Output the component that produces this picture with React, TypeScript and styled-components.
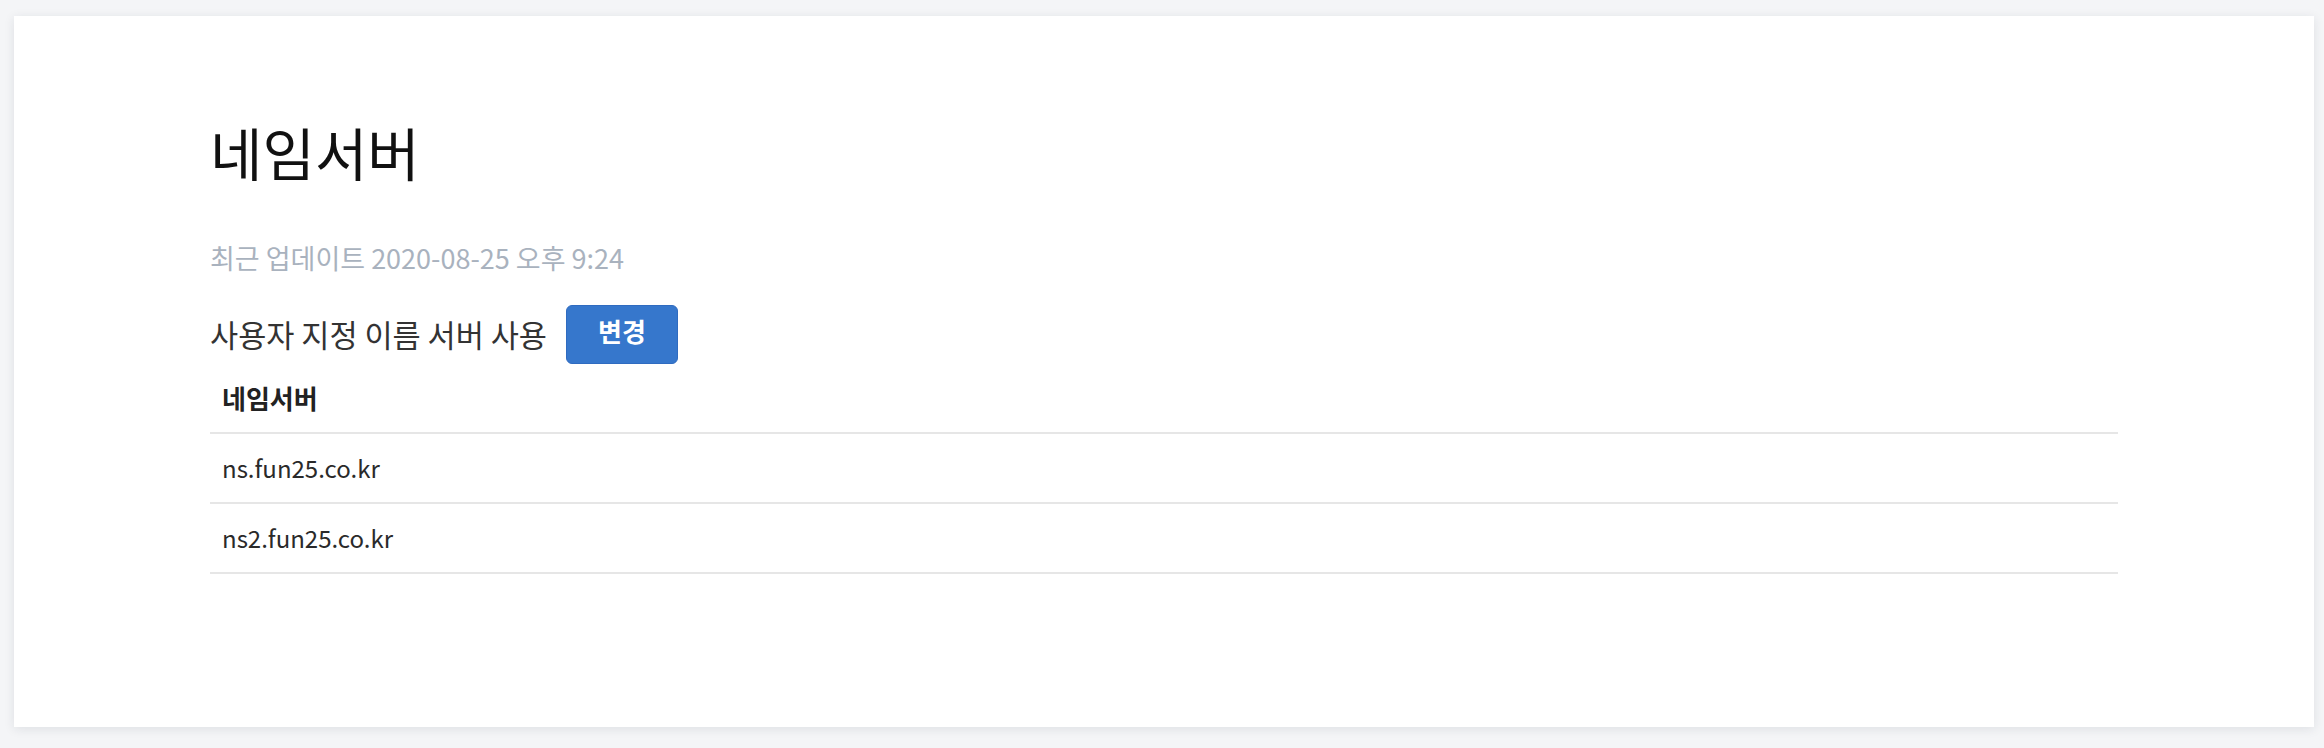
import React from 'react';
import styled, { createGlobalStyle } from 'styled-components';

const GlobalStyle = createGlobalStyle`
   html, body {
      margin: 0;
      padding: 0;
      background: #f4f5f7;
   }

   body {
      font-family: 'Noto Sans CJK KR', 'Noto Sans', sans-serif;
      color: #222;
   }
`;

const Page = styled.div`
   padding: 16px 10px 21px 14px;
`;

const Card = styled.section`
   background: #ffffff;
   height: 711px;
   box-sizing: border-box;
   padding: 96px 196px 0;
   box-shadow: 0 2px 10px rgba(30, 40, 60, 0.1);
`;

const Title = styled.h1`
   margin: 0;
   font-size: 57px;
   font-weight: 400;
   line-height: 1.4;
   color: #111;
`;

const Updated = styled.p`
   margin: 47px 0 0;
   font-size: 27px;
   line-height: 1.4;
   color: #a9b2be;
`;

const OptionRow = styled.div`
   display: flex;
   align-items: center;
   gap: 19px;
   margin-top: 28px;
`;

const OptionLabel = styled.span`
   font-size: 30.6px;
   color: #333;
`;

const ChangeButton = styled.button`
   width: 112px;
   height: 59px;
   border: 1px solid #2f6bc0;
   border-radius: 6px;
   background: #3677cc;
   color: #fff;
   font-family: inherit;
   font-size: 26px;
   font-weight: 700;
   padding: 0 0 8px;
   cursor: pointer;
`;

const Table = styled.table`
   width: 100%;
   border-collapse: collapse;
`;

const HeadCell = styled.th`
   text-align: left;
   padding: 0 12px;
   height: 68px;
   font-size: 26px;
   font-weight: 700;
   color: #222;
   border-bottom: 2px solid #e6e6e6;
`;

const Cell = styled.td`
   padding: 0 12px;
   height: 68px;
   font-size: 24px;
   color: #2a2a2a;
   border-bottom: 2px solid #e6e6e6;
`;

const nameservers = ['ns.fun25.co.kr', 'ns2.fun25.co.kr'];

const App = () => {
   return (
      <>
         <GlobalStyle />
         <Page>
            <Card>
               <Title>네임서버</Title>
               <Updated>최근 업데이트 2020-08-25 오후 9:24</Updated>
               <OptionRow>
                  <OptionLabel>사용자 지정 이름 서버 사용</OptionLabel>
                  <ChangeButton type="button">변경</ChangeButton>
               </OptionRow>
               <Table>
                  <thead>
                     <tr>
                        <HeadCell>네임서버</HeadCell>
                     </tr>
                  </thead>
                  <tbody>
                     {nameservers.map((ns) => (
                        <tr key={ns}>
                           <Cell>{ns}</Cell>
                        </tr>
                     ))}
                  </tbody>
               </Table>
            </Card>
         </Page>
      </>
   );
};

export default App;
